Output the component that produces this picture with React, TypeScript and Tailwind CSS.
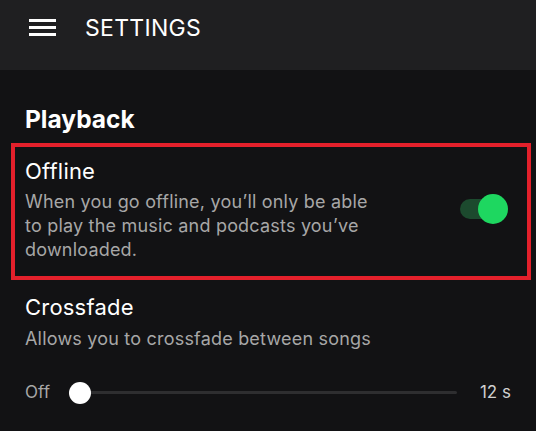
import React from "react";

function Toggle() {
  return (
    <div className="relative h-[30px] w-[48px] shrink-0">
      <div className="absolute left-0 top-[5px] h-[20px] w-[40px] rounded-full bg-[#1c4a2e]" />
      <div className="absolute right-0 top-0 h-[30px] w-[30px] rounded-full bg-[#1ed760]" />
    </div>
  );
}

function Slider() {
  return (
    <div className="relative flex h-[22px] flex-1 items-center">
      <div className="h-[3px] w-full rounded-full bg-[#2e2e30]" />
      <div className="absolute left-0 top-0 h-[22px] w-[22px] rounded-full bg-white" />
    </div>
  );
}

export default function App() {
  return (
    <div
      className="flex h-[431px] w-[536px] flex-col overflow-hidden bg-[#121214] text-white"
      style={{ fontFamily: "Inter, 'Noto Sans', sans-serif" }}
    >
      {/* Header */}
      <header className="flex h-[70px] shrink-0 items-start bg-[#1f1f21] px-[29px] pt-[14px]">
        <div className="mt-[5px] flex w-[27px] flex-col gap-[4px]">
          <span className="h-[3px] w-full bg-white" />
          <span className="h-[3px] w-full bg-white" />
          <span className="h-[3px] w-full bg-white" />
        </div>
        <h1 className="ml-[29px] text-[23px] font-normal leading-[28px] tracking-[0.3px]">SETTINGS</h1>
      </header>

      <main className="flex flex-col pt-[33px]">
        <h2 className="px-[25px] text-[24.5px] font-bold leading-[32px]">Playback</h2>

        {/* Offline (highlighted) */}
        <section className="ml-[11px] mr-[5px] mt-[8px] flex items-center justify-between border-4 border-[#e3202b] pb-[14px] pl-[10px] pr-[19px] pt-[9px]">
          <div className="flex flex-col">
            <span className="text-[22px] leading-[30px] tracking-[0.2px]">Offline</span>
            <p className="mt-[4px] w-[355px] text-[18px] leading-[24px] tracking-[0.2px] text-[#a7a7a7]">
              When you go offline, you’ll only be able to play the music and podcasts you’ve downloaded.
            </p>
          </div>
          <Toggle />
        </section>

        {/* Crossfade */}
        <section className="mt-[12px] flex flex-col px-[25px]">
          <span className="text-[22px] leading-[30px] tracking-[0.2px]">Crossfade</span>
          <p className="mt-[5px] text-[18px] leading-[24px] tracking-[0.2px] text-[#a7a7a7]">Allows you to crossfade between songs</p>
          <div className="mt-[29px] flex items-center gap-[19px]">
            <span className="text-[17px] text-[#a7a7a7]">Off</span>
            <Slider />
            <span className="ml-[4px] text-[17px] text-[#d0d0d0]">12 s</span>
          </div>
        </section>
      </main>
    </div>
  );
}
